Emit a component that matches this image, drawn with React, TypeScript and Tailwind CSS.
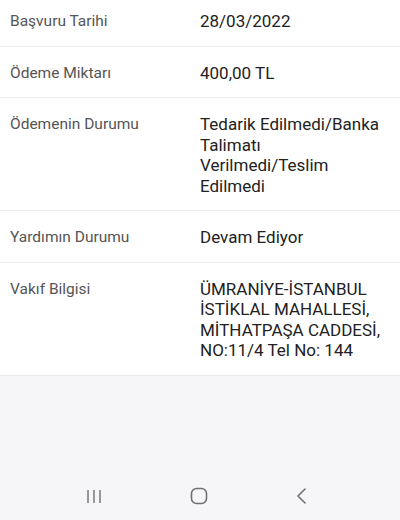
import React from 'react';

const rows: Array<{ label: string; value: string[] }> = [
  { label: 'Başvuru Tarihi', value: ['28/03/2022'] },
  { label: 'Ödeme Miktarı', value: ['400,00 TL'] },
  { label: 'Ödemenin Durumu', value: ['Tedarik Edilmedi/Banka', 'Talimatı', 'Verilmedi/Teslim', 'Edilmedi'] },
  { label: 'Yardımın Durumu', value: ['Devam Ediyor'] },
  { label: 'Vakıf Bilgisi', value: ['ÜMRANİYE-İSTANBUL', 'İSTİKLAL MAHALLESİ,', 'MİTHATPAŞA CADDESİ,', 'NO:11/4 Tel No: 144'] },
];

export default function App() {
  return (
    <div className="w-[400px] h-[520px] flex flex-col bg-[#f6f6f8] overflow-hidden" style={{ fontFamily: 'Roboto, "Noto Sans", sans-serif' }}>
      <div className="bg-white">
        {rows.map((row, i) => (
          <div
            key={row.label}
            className={`flex border-b border-[#ececee] pb-[14px] ${i === 0 ? 'pt-[11px]' : 'pt-[16px]'}`}
          >
            <div className="w-[200px] pl-[10px] text-[15.5px] leading-[20px] text-[#555555]">{row.label}</div>
            <div className="flex-1 text-[17px] leading-[20.5px] text-[#222222]">
              {row.value.map((line) => (
                <div key={line}>{line}</div>
              ))}
            </div>
          </div>
        ))}
      </div>

      <div className="flex-1" />

      <div className="h-[50px] flex items-center justify-between pl-[86px] pr-[92px] pt-[2px]">
        <svg width="16" height="16" viewBox="0 0 16 16" className="text-[#707070]">
          <path d="M2 2v13M8 2v13M14 2v13" stroke="currentColor" strokeWidth="1.4" fill="none" />
        </svg>
        <svg width="18" height="18" viewBox="0 0 18 18" className="text-[#707070]">
          <rect x="1.5" y="1.5" width="15" height="15" rx="5" stroke="currentColor" strokeWidth="1.6" fill="none" />
        </svg>
        <svg width="12" height="18" viewBox="0 0 12 18" className="text-[#707070]">
          <path d="M9 2L2 9l7 7" stroke="currentColor" strokeWidth="1.6" fill="none" strokeLinecap="round" strokeLinejoin="round" />
        </svg>
      </div>
    </div>
  );
}
